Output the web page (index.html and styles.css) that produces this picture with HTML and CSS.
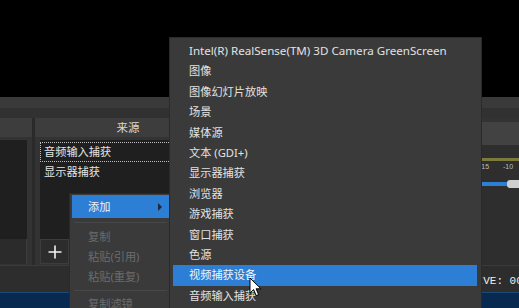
FILE: index.html
```html
<!DOCTYPE html>
<html lang="zh-CN">
<head>
<meta charset="utf-8">
<title>OBS 来源菜单</title>
<link rel="stylesheet" href="styles.css">
</head>
<body>
<div class="app">
  <div class="preview"></div>
  <div class="band1"></div>
  <div class="band2"></div>
  <div class="docks">
    <div class="dock scenes">
      <div class="dock-head"></div>
      <div class="dock-list"></div>
      <div class="dock-tools"></div>
    </div>
    <div class="dock sources">
      <div class="dock-head">来源</div>
      <div class="dock-list">
        <div class="src-item focused">音频输入捕获</div>
        <div class="src-item">显示器捕获</div>
      </div>
      <div class="dock-tools">
        <div class="tool-btn">
          <svg width="14" height="14" viewBox="0 0 14 14"><path d="M7 0.5V13.5M0.5 7H13.5" stroke="#f2f2f2" stroke-width="1.6" fill="none"/></svg>
        </div>
      </div>
    </div>
    <div class="dock mixer">
      <div class="mixer-top"></div>
      <div class="mixer-head"></div>
      <div class="mixer-gap"></div>
      <div class="meter"></div>
      <div class="scale">
        <span>-15</span><span>-10</span>
      </div>
      <div class="slider">
        <div class="fill"></div>
        <div class="handle"></div>
      </div>
    </div>
  </div>
  <div class="status"><span class="live">LIVE: 00:00:00</span></div>
  <div class="taskbar"></div>

  <div class="menu main-menu">
    <div class="mi active has-sub"><span>添加</span><span class="arrow"></span></div>
    <div class="sep"></div>
    <div class="mi disabled">复制</div>
    <div class="mi disabled">粘贴(引用)</div>
    <div class="mi disabled">粘贴(重复)</div>
    <div class="sep sep2"></div>
    <div class="mi disabled">复制滤镜</div>
  </div>

  <div class="menu sub-menu">
    <div class="si latin">Intel(R) RealSense(TM) 3D Camera GreenScreen</div>
    <div class="si">图像</div>
    <div class="si">图像幻灯片放映</div>
    <div class="si">场景</div>
    <div class="si">媒体源</div>
    <div class="si">文本 (GDI+)</div>
    <div class="si">显示器捕获</div>
    <div class="si">浏览器</div>
    <div class="si">游戏捕获</div>
    <div class="si">窗口捕获</div>
    <div class="si">色源</div>
    <div class="si active">视频捕获设备</div>
    <div class="si">音频输入捕获</div>
  </div>

  <svg class="cursor" width="13" height="20" viewBox="0 0 13 20"><path d="M1 1V16L4.6 12.6L7.2 18.6L9.6 17.6L7.1 11.8H12Z" fill="#fff" stroke="#000" stroke-width="1" stroke-linejoin="round"/></svg>
</div>
</body>
</html>
```
FILE: styles.css
```css
html, body {
  margin: 0;
  padding: 0;
  background: #2e2e2e;
}
body {
  width: 519px;
  height: 308px;
  overflow: hidden;
  font-family: "Noto Sans", "Noto Sans CJK SC", sans-serif;
  font-size: 11px;
  color: #e0e0e0;
}
.app {
  position: relative;
  width: 519px;
  height: 308px;
  display: flex;
  flex-direction: column;
  overflow: hidden;
}
.preview { height: 97px; background: #000; flex: none; }
.band1 { height: 11px; background: #3a3a3a; flex: none; }
.band2 { height: 10px; background: #313131; flex: none; }
.docks {
  height: 147px;
  flex: none;
  display: flex;
  gap: 3px;
  background: #2a2a2a;
}
.dock {
  display: flex;
  flex-direction: column;
  background: #333;
  flex: none;
}
.scenes { width: 32px; }
.sources { width: 184px; }
.mixer { flex: 1 1 0; min-width: 0; background: #2e2e2e; }
.dock-head {
  height: 19px;
  background: #3d3d3d;
  text-align: center;
  line-height: 19px;
  font-size: 11.5px;
  color: #d8d8d8;
  padding-left: 2px;
}
.dock-list {
  margin-top: 3px;
  height: 99px;
  background: #1f1f1f;
}
.scenes .dock-list { margin-right: 5px; }
.sources .dock-list { margin-left: 5px; padding-top: 2px; box-sizing: border-box; }
.src-item {
  height: 18px;
  line-height: 18px;
  padding-left: 3px;
  font-size: 11.2px;
  color: #e4e4e4;
  border: 1px solid transparent;
}
.src-item.focused { border: 1px dotted #bdbdbd; }
.dock-tools {
  height: 25px;
  display: flex;
}
.scenes .dock-tools { margin-right: 5px; background: #2b2b2b; border-right: 1px solid #3c3c3c; }
.sources .dock-tools { padding-left: 5px; }
.tool-btn {
  width: 29px;
  height: 25px;
  background: #2c2c2c;
  border: 1px solid #3c3c3c;
  box-sizing: border-box;
  display: flex;
  align-items: center;
  justify-content: center;
}
.mixer-top { height: 4px; background: #333; }
.mixer-head { height: 23px; background: #424242; }
.mixer-gap { height: 13px; background: #2e2e2e; }
.meter {
  height: 3px;
  background: #7c7b3c;
  margin-left: 34px;
}
.scale {
  display: flex;
  justify-content: flex-end;
  margin-right: -1px;
  height: 14px;
}
.scale span {
  flex: none;
  width: 24px;
  text-align: center;
  font-size: 7px;
  line-height: 11px;
  color: #bdbdbd;
  font-family: "Liberation Sans", sans-serif;
}
.slider {
  margin-top: 4px;
  display: flex;
  align-items: center;
  padding-left: 34px;
  height: 9px;
}
.fill { flex: 1; height: 4px; background: #2d7fd6; border-radius: 2px 0 0 2px; }
.handle { width: 14px; height: 8px; background: #cfcfcf; border-radius: 3px; flex: none; margin-right: -2px; }
.status {
  height: 27px;
  flex: none;
  background: #2d2d2d;
  border-top: 1px solid #3a3a3a;
  box-sizing: border-box;
  padding-left: 470px;
  display: flex;
  align-items: center;
  overflow: hidden;
}
.live {
  font-family: "Liberation Mono", monospace;
  font-size: 11px;
  color: #efefef;
  white-space: nowrap;
  margin-top: 3px;
}
.taskbar {
  flex: 1;
  background: #082a50;
  border-top: 1px solid #1d4a78;
}

.menu {
  position: absolute;
  background: #3a3a3a;
  border: 1px solid #2a2a2a;
  box-sizing: border-box;
}
.main-menu {
  left: 69px;
  top: 193px;
  width: 103px;
  height: 130px;
  padding: 1px 2px;
}
.mi {
  height: 20px;
  line-height: 20px;
  padding-left: 16px;
  font-size: 11.2px;
  color: #e4e4e4;
  display: flex;
  align-items: center;
  justify-content: space-between;
}
.mi.active {
  height: 23px;
  background: #2d7fd6;
  color: #f2f2f2;
  padding-right: 7px;
}
.mi.disabled { color: #6c6c6c; }
.arrow {
  width: 0;
  height: 0;
  border-left: 4px solid #1a2a40;
  border-top: 4px solid transparent;
  border-bottom: 4px solid transparent;
}
.sep {
  height: 9px;
  display: flex;
  align-items: center;
}
.sep::after {
  content: "";
  flex: 1;
  height: 1px;
  background: #474747;
  margin: 0 2px;
}
.sep2 { height: 7px; }
.sub-menu {
  left: 169px;
  top: 37px;
  width: 313px;
  height: 290px;
  padding: 3px 4px 3px 3px;
}
.si {
  height: 20.4px;
  line-height: 20.4px;
  padding-left: 16px;
  font-size: 11.2px;
  color: #e2e2e2;
  white-space: nowrap;
}
.si.latin { font-size: 11.6px; }
.si.active { background: #2d7fd6; color: #f4f4f4; }
.cursor {
  position: absolute;
  left: 249px;
  top: 277px;
}
```
